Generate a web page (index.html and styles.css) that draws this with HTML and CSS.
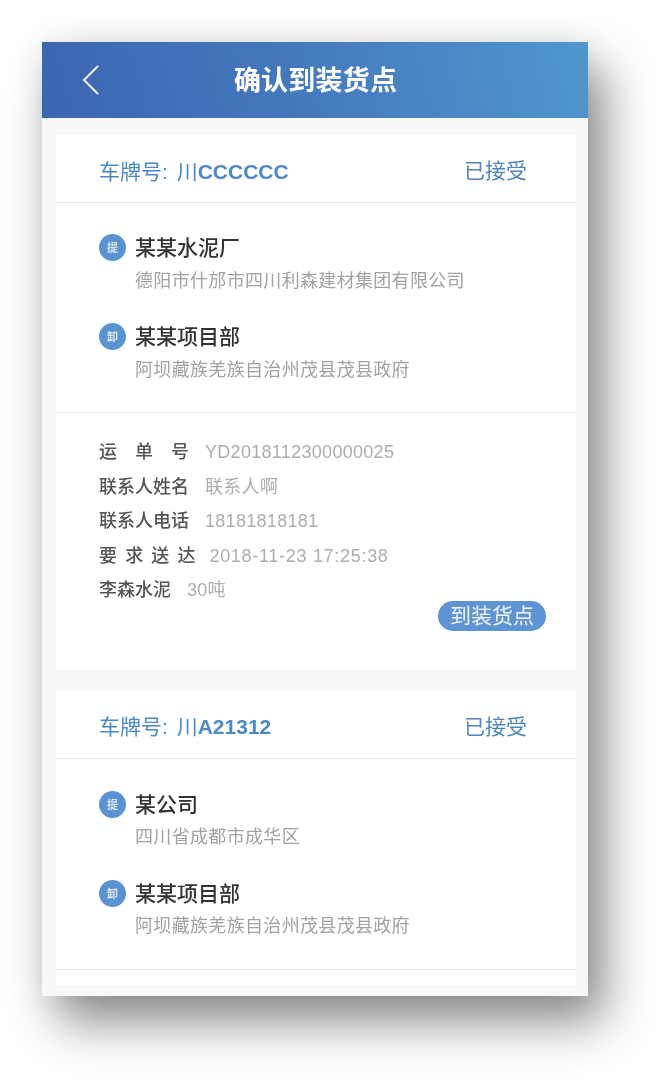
FILE: index.html
```html
<!DOCTYPE html>
<html lang="zh">
<head>
<meta charset="utf-8">
<title>确认到装货点</title>
<link rel="stylesheet" href="styles.css">
</head>
<body>
<main class="phone">
  <header class="topbar">
    <svg class="back" width="20" height="32" viewBox="0 0 20 32"><path d="M17 2 3 16l14 14" fill="none" stroke="#fff" stroke-width="1.8"/></svg>
    <h1 class="title">确认到装货点</h1>
  </header>
  <div class="list">
    <section class="card card-first">
      <div class="card-head"><span class="plate">车牌号: 川<b class="plate-id">CCCCCC</b></span><span class="status">已接受</span></div>
      <div class="route">
        <div class="stop">
          <div class="stop-name"><span class="badge">提</span>某某水泥厂</div>
          <div class="stop-addr">德阳市什邡市四川利森建材集团有限公司</div>
        </div>
        <div class="stop">
          <div class="stop-name"><span class="badge">卸</span>某某项目部</div>
          <div class="stop-addr">阿坝藏族羌族自治州茂县茂县政府</div>
        </div>
      </div>
      <div class="details">
        <div class="row"><span class="label">运　单　号</span><span class="value">YD2018112300000025</span></div>
        <div class="row"><span class="label">联系人姓名</span><span class="value">联系人啊</span></div>
        <div class="row"><span class="label">联系人电话</span><span class="value">18181818181</span></div>
        <div class="row"><span class="label wide">要 求 送 达</span><span class="value value-date">2018-11-23 17:25:38</span></div>
        <div class="row"><span class="label">李森水泥</span><span class="value">30吨</span></div>
        <div class="actions"><span class="btn">到装货点</span></div>
      </div>
    </section>
    <section class="card card-cut">
      <div class="card-head"><span class="plate">车牌号: 川<b class="plate-id">A21312</b></span><span class="status">已接受</span></div>
      <div class="route">
        <div class="stop">
          <div class="stop-name"><span class="badge">提</span>某公司</div>
          <div class="stop-addr">四川省成都市成华区</div>
        </div>
        <div class="stop">
          <div class="stop-name"><span class="badge">卸</span>某某项目部</div>
          <div class="stop-addr">阿坝藏族羌族自治州茂县茂县政府</div>
        </div>
      </div>
    </section>
  </div>
</main>
</body>
</html>
```
FILE: styles.css
```css
* { box-sizing: border-box; }
html, body { margin: 0; height: 1080px; overflow: hidden; background: #fff; }
body {
  padding: 42px 84px 84px 42px;
  font-family: "Liberation Sans", "Noto Sans CJK SC", sans-serif;
}
.phone {
  width: 546px;
  height: 954px;
  background: #f7f8fa;
  overflow: hidden;
  box-shadow: 16px 26px 46px rgba(0, 0, 0, .46), 0 0 30px rgba(0, 0, 0, .07);
  position: relative;
}
.topbar {
  height: 76px;
  background: linear-gradient(75deg, #3b66b0 0%, #4478bd 45%, #4f97cf 100%);
  display: flex;
  align-items: center;
  justify-content: center;
  position: relative;
}
.back { position: absolute; left: 39px; top: 22px; }
.title {
  margin: 0;
  color: #fff;
  font-family: "Noto Sans CJK SC", sans-serif;
  font-size: 27px;
  font-weight: 700;
  letter-spacing: .2px;
  line-height: 74px;
  height: 76px;
  padding-left: 1px;
  filter: blur(.4px);
}
.list {
  padding: 17px 12px 0 14px;
  display: flex;
  flex-direction: column;
  gap: 21px;
}
.card { background: #fff; }
.card-first { height: 534px; }
.card-head {
  height: 68px;
  padding: 0 49px 0 43px;
  display: flex;
  align-items: center;
  justify-content: space-between;
  border-bottom: 1px solid #e6e9ee;
  color: #4a8ac8;
  font-size: 21px;
  filter: blur(.35px);
}
.card-cut .card-head { height: 69px; }
.plate { word-spacing: 3px; padding-top: 2px; }
.plate-id { font-weight: 700; }
.status {
  color: #4f86bb;
  font-family: "Noto Sans CJK SC", sans-serif;
  padding-top: 1px;
}
.route {
  height: 210px;
  padding: 31px 0 0 43px;
  border-bottom: 1px solid #e8eaee;
}
.card-cut .route { height: 211px; padding-top: 32px; }
.stop { height: 89px; }
.stop-name {
  display: flex;
  align-items: flex-start;
  gap: 9px;
  height: 27px;
  line-height: 24px;
  font-family: "Noto Sans CJK SC", sans-serif;
  font-size: 21px;
  font-weight: 500;
  color: #333;
  filter: blur(.35px);
}
.badge {
  width: 27px;
  height: 27px;
  border-radius: 50%;
  background: #5a93d1;
  color: #dfe8f3;
  font-size: 11px;
  font-weight: 700;
  line-height: 27px;
  text-align: center;
}
.stop-addr {
  margin: 5px 0 0 36px;
  font-family: "Noto Sans CJK SC", sans-serif;
  font-size: 18px;
  line-height: 26px;
  letter-spacing: .33px;
  color: #a2a2a4;
  filter: blur(.4px);
}
.card-cut .stop-addr { margin-top: 4px; }
.details { padding: 20px 30px 0 43px; }
.row {
  display: flex;
  align-items: baseline;
  height: 34.5px;
  line-height: 34.5px;
  font-size: 18px;
  filter: blur(.35px);
}
.label {
  color: #555;
  font-family: "Noto Sans CJK SC", sans-serif;
  font-weight: 500;
  margin-right: 16px;
  white-space: pre;
}
.wide { margin-right: 14px; word-spacing: 4.1px; }
.value { color: #adadb0; letter-spacing: .3px; }
.value-date { letter-spacing: .7px; }
.actions { display: flex; justify-content: flex-end; margin-top: -5px; }
.btn {
  width: 108px;
  height: 30px;
  border-radius: 15px;
  background: #5e94d4;
  color: #f3f6fb;
  font-family: "Noto Sans CJK SC", sans-serif;
  font-size: 21px;
  line-height: 27px;
  text-align: center;
  filter: blur(.3px);
}
.card-cut { height: 295px; }
```
